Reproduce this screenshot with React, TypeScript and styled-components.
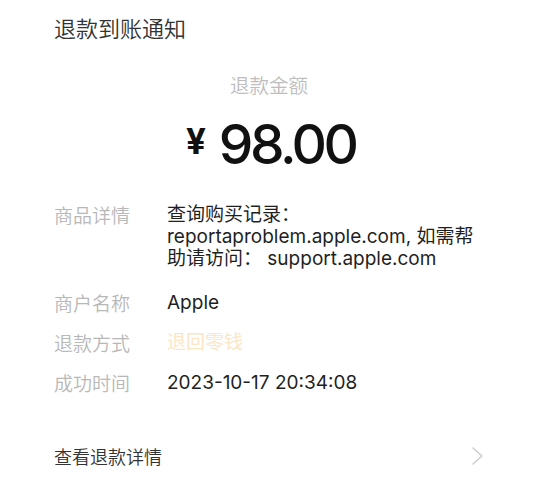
import React from "react";
import styled, { createGlobalStyle } from "styled-components";

const GlobalStyle = createGlobalStyle`
  html, body {
    margin: 0;
    padding: 0;
    background: #ffffff;
  }
  body {
    font-family: "Inter", "Noto Sans CJK SC", sans-serif;
    -webkit-font-smoothing: antialiased;
  }
`;

const Page = styled.div`
  width: 539px;
  height: 500px;
  box-sizing: border-box;
  padding: 12px 55px 0 54px;
  display: flex;
  flex-direction: column;
  background: #ffffff;
  overflow: hidden;
`;

const Title = styled.h1`
  margin: 0;
  font-family: "Noto Sans CJK SC", sans-serif;
  font-weight: 350;
  font-size: 22px;
  line-height: 30px;
  color: #333333;
`;

const AmountSection = styled.section`
  margin-top: 31px;
  display: flex;
  flex-direction: column;
  align-items: center;
`;

const AmountLabel = styled.div`
  font-family: "Noto Sans CJK SC", sans-serif;
  font-weight: 350;
  font-size: 19.5px;
  line-height: 24px;
  color: #bdbdbd;
`;

const Amount = styled.div`
  margin-top: 15px;
  display: flex;
  align-items: center;
  height: 64px;
  color: #111111;
`;

const Currency = styled.span`
  font-family: "Inter", sans-serif;
  font-weight: 700;
  font-size: 35px;
  line-height: 64px;
  margin-right: 13px;
  padding-bottom: 7px;
`;

const Digits = styled.span`
  font-family: "Inter", sans-serif;
  font-weight: 500;
  font-size: 55px;
  line-height: 64px;
  letter-spacing: -3.5px;
  margin-right: -3.5px;
`;

const Details = styled.dl`
  margin: 28px 0 0 0;
  display: flex;
  flex-direction: column;
  gap: 18px;
`;

const Row = styled.div<{ $extra?: number }>`
  display: grid;
  grid-template-columns: 113px 1fr;
  font-size: 19px;
  line-height: 22px;
  margin-bottom: ${(p) => p.$extra ?? 0}px;
`;

const Label = styled.dt`
  margin: 0;
  font-family: "Noto Sans CJK SC", sans-serif;
  font-weight: 350;
  color: #b8b8b8;
`;

const Value = styled.dd<{ $tone?: "normal" | "faint" }>`
  margin: 0;
  color: ${(p) => (p.$tone === "faint" ? "#fbe6c6" : "#1f1f1f")};
  font-family: "Inter", "Noto Sans CJK SC", sans-serif;
`;

const Footer = styled.div`
  margin-top: 50px;
  display: flex;
  align-items: center;
  justify-content: space-between;
  height: 24px;
`;

const FooterText = styled.span`
  font-family: "Noto Sans CJK SC", sans-serif;
  font-weight: 350;
  font-size: 18px;
  line-height: 24px;
  color: #333333;
`;

const Chevron = () => (
  <svg width="12" height="18" viewBox="0 0 12 18" fill="none">
    <polyline
      points="1,1 10,9 1,17"
      stroke="#cccccc"
      strokeWidth="1.4"
      strokeLinecap="round"
      strokeLinejoin="round"
    />
  </svg>
);

export default function App() {
  return (
    <>
      <GlobalStyle />
      <Page>
        <Title>退款到账通知</Title>
        <AmountSection>
          <AmountLabel>退款金额</AmountLabel>
          <Amount>
            <Currency>¥</Currency>
            <Digits>98.00</Digits>
          </Amount>
        </AmountSection>
        <Details>
          <Row $extra={4}>
            <Label>商品详情</Label>
            <Value>
              查询购买记录：
              <br />
              reportaproblem.apple.com, 如需帮
              <br />
              助请访问： support.apple.com
            </Value>
          </Row>
          <Row>
            <Label>商户名称</Label>
            <Value>Apple</Value>
          </Row>
          <Row>
            <Label>退款方式</Label>
            <Value $tone="faint">退回零钱</Value>
          </Row>
          <Row>
            <Label>成功时间</Label>
            <Value>2023-10-17 20:34:08</Value>
          </Row>
        </Details>
        <Footer>
          <FooterText>查看退款详情</FooterText>
          <Chevron />
        </Footer>
      </Page>
    </>
  );
}
